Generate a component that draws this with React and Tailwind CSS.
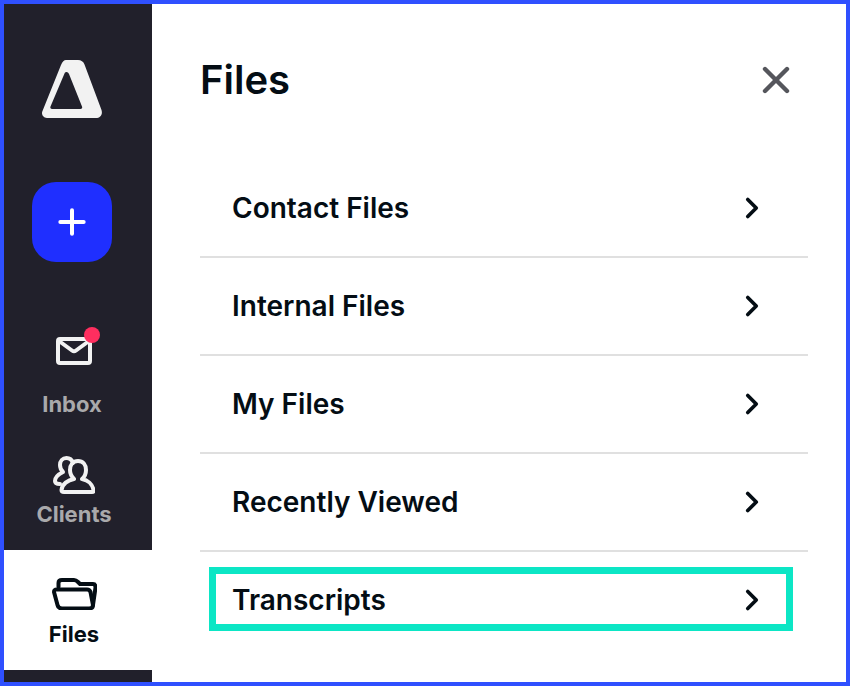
import { ChevronRight, X, Plus } from 'lucide-react'

function Logo() {
  return (
    <svg width="61" height="58" viewBox="0 0 61 58" className="block">
      <path
        fillRule="evenodd"
        fill="#f2f2f2"
        d="M24 0 H36 C39 0 41.500 1.500 42.500 4.500 L59.500 50 C61 55 58 58 54 58 H5 C1 58 -1 54 0.500 51 L19 5 C20.500 1.500 22 0 24 0 Z M24.500 12 C23.500 12 23 12.500 22.500 13.500 L8.500 46.500 C8 48 8.500 49 10 49 H38.500 C40 49 40.500 48 40 46.500 L27 14 C26.500 12.800 25.500 12 24.500 12 Z"
      />
    </svg>
  )
}

function MailIcon() {
  return (
    <svg width="36" height="28" viewBox="0 0 36 28" fill="none" stroke="#f2f2f2" strokeWidth="4" strokeLinecap="round" strokeLinejoin="round">
      <rect x="2" y="2" width="32" height="24" rx="2" />
      <path d="M3 4 L16 13.500 Q18 15 20 13.500 L33 4" />
    </svg>
  )
}

function ClientsIcon() {
  return (
    <svg width="42" height="38" viewBox="0 0 42 38" fill="none" stroke="#f2f2f2" strokeWidth="4" strokeLinecap="round" strokeLinejoin="round">
      <path d="M20 7 C19 4 16.500 2 13.500 2 C9.500 2 7 5 7 9 C7 12 8 14 10 16 C6 18 2 21 2 25 C2 27 4 28 7 28" />
      <path d="M25 5 C20 5 17 9 17 14 C17 18 19 21 21 23 C15 24 9 28 8.500 34 C8.500 35.500 9.500 36 11 36 H39 C40.500 36 41 35.500 40.500 34 C39.500 28 34.500 24 29 23 C31.500 21 33 18 33 14 C33 9 30 5 25 5 Z" />
    </svg>
  )
}

function FolderIcon() {
  return (
    <svg width="45" height="32" viewBox="0 0 45 32" fill="none" stroke="#040d14" strokeWidth="4" strokeLinecap="round" strokeLinejoin="round">
      <path d="M6.500 9 V5 C6.500 3 8 2 10 2 H22 C24 2 25 3 26 4 L28 6 H41 C42.800 6 43.500 7.500 43.500 9.500 L41 27" />
      <path d="M2 14 C2 12 3 11.500 5 11.500 H35 C37 11.500 38 12.500 38.500 14 L41 27 C41 29.500 39.500 30.500 37 30.500 H10 C7.500 30.500 6 29.500 5.500 27 Z" />
    </svg>
  )
}

function FileRow({ label, highlight }) {
  if (highlight) {
    return (
      <div className="flex items-center justify-between h-[64px] mt-[15px] ml-[9px] mr-[15px] pl-[16px] pr-[17px] pt-[2px] border-[7px] border-[#0ce6c5]">
        <span className="text-[28px] font-semibold text-[#040d14]">{label}</span>
        <ChevronRight size={34} strokeWidth={2.600} color="#040d14" />
      </div>
    )
  }
  return (
    <div className="flex items-center justify-between h-[98px] pl-[32px] pr-[39px] border-b-2 border-[#e0e0e0]">
      <span className="text-[28px] font-semibold text-[#040d14]">{label}</span>
      <ChevronRight size={34} strokeWidth={2.600} color="#040d14" />
    </div>
  )
}

export default function App() {
  return (
    <div className="w-[850px] h-[686px] border-4 border-[#2f50ff] flex bg-white font-['Inter',sans-serif] overflow-hidden">
      <div className="w-[148px] h-full bg-[#21202b] flex flex-col">
        <div className="pt-[56px] pl-[38px]">
          <Logo />
        </div>
        <div className="mt-[64px] ml-[28px] w-[80px] h-[80px] rounded-[24px] bg-[#1f2fff] flex items-center justify-center">
          <Plus size={40} strokeWidth={2.400} color="#ffffff" />
        </div>
        <div className="mt-[75px] pr-[8px] flex flex-col items-center text-[#a9a9ab]">
          <div className="relative h-[28px]">
            <MailIcon />
            <span className="absolute w-[16px] h-[16px] rounded-full bg-[#ff2e5f] top-[-10px] right-[-8px]" />
          </div>
          <span className="mt-[25px] mr-[4px] text-[22px] leading-[28px] font-bold">Inbox</span>
          <div className="mt-[38px] h-[38px]">
            <ClientsIcon />
          </div>
          <span className="mt-[6px] text-[22px] leading-[28px] font-bold">Clients</span>
        </div>
        <div className="mt-[22px] pt-[28px] pb-[22px] pr-[8px] bg-white flex flex-col items-center text-[#040d14]">
          <div className="h-[32px]">
            <FolderIcon />
          </div>
          <span className="mt-[10px] text-[22px] leading-[28px] font-bold">Files</span>
        </div>
      </div>
      <div className="flex-1 pl-[48px] pr-[38px]">
        <div className="flex items-center justify-between h-[100px] pt-[52px]">
          <h1 className="text-[40px] font-semibold text-[#040d14]">Files</h1>
          <X size={44} strokeWidth={2.400} color="#55565c" className="mr-[10px]" />
        </div>
        <div className="mt-[56px]">
          <FileRow label="Contact Files" />
          <FileRow label="Internal Files" />
          <FileRow label="My Files" />
          <FileRow label="Recently Viewed" />
          <FileRow label="Transcripts" highlight />
        </div>
      </div>
    </div>
  )
}
